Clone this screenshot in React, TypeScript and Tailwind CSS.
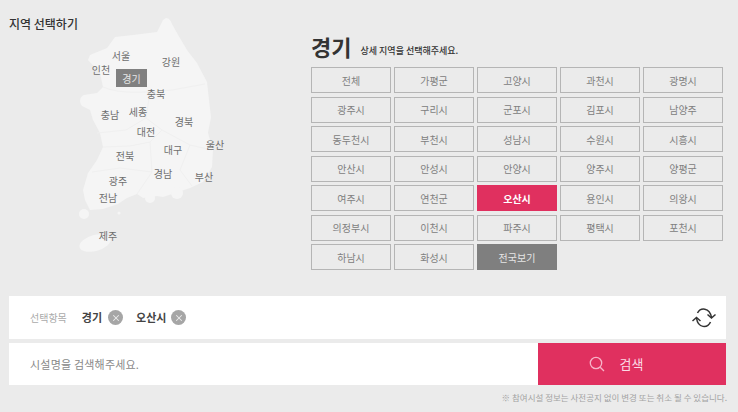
import { X } from 'lucide-react';

const FONT = "font-['Noto_Sans_CJK_KR','Noto_Sans',sans-serif]";

const CITIES = [
  '전체', '가평군', '고양시', '과천시', '광명시',
  '광주시', '구리시', '군포시', '김포시', '남양주',
  '동두천시', '부천시', '성남시', '수원시', '시흥시',
  '안산시', '안성시', '안양시', '양주시', '양평군',
  '여주시', '연천군', '오산시', '용인시', '의왕시',
  '의정부시', '이천시', '파주시', '평택시', '포천시',
  '하남시', '화성시', '전국보기',
];

// places on the map, centred on the label
const REGIONS = [
  { name: '서울', pos: 'left-[121px] top-[56px]' },
  { name: '강원', pos: 'left-[171px] top-[62px]' },
  { name: '인천', pos: 'left-[101px] top-[70px]' },
  { name: '충북', pos: 'left-[156px] top-[94px]' },
  { name: '세종', pos: 'left-[138px] top-[112px]' },
  { name: '충남', pos: 'left-[110px] top-[115px]' },
  { name: '경북', pos: 'left-[184px] top-[122px]' },
  { name: '대전', pos: 'left-[146px] top-[132px]' },
  { name: '울산', pos: 'left-[215px] top-[145px]' },
  { name: '대구', pos: 'left-[173px] top-[150px]' },
  { name: '전북', pos: 'left-[125px] top-[156px]' },
  { name: '경남', pos: 'left-[163px] top-[174px]' },
  { name: '부산', pos: 'left-[204px] top-[177px]' },
  { name: '광주', pos: 'left-[118px] top-[181px]' },
  { name: '전남', pos: 'left-[108px] top-[198px]' },
  { name: '제주', pos: 'left-[108px] top-[236px]' },
];

function KoreaMap() {
  return (
    <svg className="absolute left-0 top-0" width="300" height="270" viewBox="0 0 300 270">
      <path
        fill="#f5f5f5"
        d="M166 18 C169 18 171 21 172 24 L177 33 L187 50 L197 63 L207 82 L209 100 L211 117 L208 133 L213 150 L212 167 L203 182 L190 188 L172 194 L163 197 L157 196 L143 198 L137 194 L127 198 L118 204 L103 209 L90 210 L85 200 L83 190 L88 173 L97 160 L103 147 L100 133 L93 120 L90 110 L82 106 C78 101 81 96 84 95 L97 93 L103 87 L100 73 L88 60 L90 55 L107 48 L115 37 L133 35 L157 32 L163 20 Z"
      />
      <circle cx="177" cy="193" r="6" fill="#f5f5f5" />
      <circle cx="150" cy="198" r="5" fill="#f5f5f5" />
      <circle cx="84" cy="214" r="5" fill="#f5f5f5" />
      <circle cx="119" cy="213" r="1.5" fill="#f5f5f5" />
      <ellipse cx="95" cy="243" rx="16" ry="8" fill="#f5f5f5" transform="rotate(-15 95 243)" />
      <path
        fill="none"
        stroke="#f0f0f0"
        strokeWidth="1"
        d="M103 87 C120 95 150 92 172 90 L205 84 M150 92 L146 118 L162 130 L190 145 L212 150 M97 133 L126 130 L146 118 M103 147 L130 146 L150 142 L162 130 M150 142 L152 172 L137 194 M92 172 L120 168 L152 172 M190 145 L180 170 L192 186"
      />
    </svg>
  );
}

function RemoveBadge() {
  return (
    <span className="flex h-[15px] w-[15px] items-center justify-center rounded-full bg-[#a6a6a6]">
      <X size={10} strokeWidth={2.5} color="#ebebeb" />
    </span>
  );
}

function RefreshIcon() {
  return (
    <svg width="24" height="22" viewBox="0 0 24 22" fill="none" stroke="#333" strokeWidth="1.5">
      <path d="M5.5 6 C8.5 0.5 17.5 0 19.5 10.5" />
      <path d="M15.5 7.5 L19.5 11 L23.5 7.5" />
      <path d="M18.5 15 C15.5 21.5 6 21.5 4.5 11" />
      <path d="M0.5 14 L4.5 10.5 L8.5 14" />
    </svg>
  );
}

function SearchIcon() {
  return (
    <svg width="16" height="16" viewBox="0 0 16 16" fill="none" stroke="#f7b3c8" strokeWidth="1.3">
      <circle cx="7" cy="7" r="5.7" />
      <path d="M11.2 11.2 L15 15" />
    </svg>
  );
}

function cityClass(city: string) {
  if (city === '오산시') return 'bg-[#e0305f] border-[#e0305f] text-white font-bold';
  if (city === '전국보기') return 'bg-[#7f7f7f] border-[#7f7f7f] text-[#e6e6e6]';
  return 'border-[#b5b5b5] text-[#808080]';
}

export default function App() {
  return (
    <div className={`${FONT} flex h-[412px] w-[738px] flex-col overflow-hidden bg-[#ebebeb]`}>
      <div className="flex h-[296px]">
        {/* Map */}
        <div className="relative w-[311px] shrink-0">
          <KoreaMap />
          <h2 className="absolute left-[9px] top-[15px] text-[12px] leading-[17px] font-medium text-[#333333]">
            지역 선택하기
          </h2>
          {REGIONS.map((r) => (
            <span
              key={r.name}
              className={`absolute ${r.pos} -translate-x-1/2 -translate-y-1/2 text-[10px] leading-none text-[#6e6e6e]`}
            >
              {r.name}
            </span>
          ))}
          <span className="absolute left-[116px] top-[69px] flex h-[18px] w-[31px] items-center justify-center bg-[#808080] text-[10px] text-[#e6e6e6]">
            경기
          </span>
        </div>

        {/* City picker */}
        <div className="flex w-[412px] flex-col">
          <div className="flex h-[67px] items-end pb-[5px]">
            <span className="text-[22px] leading-[32px] font-bold text-[#333333]">경기</span>
            <span className="mb-[4px] ml-[9px] text-[9px] leading-[14px] font-medium text-[#333333]">
              상세 지역을 선택해주세요.
            </span>
          </div>
          <div className="grid grid-cols-[repeat(5,80px)] auto-rows-[26px] gap-x-[3px] gap-y-[3.5px]">
            {CITIES.map((city) => (
              <button
                key={city}
                className={`flex items-center justify-center border text-[10px] ${cityClass(city)}`}
              >
                {city}
              </button>
            ))}
          </div>
        </div>
      </div>

      {/* Selected items */}
      <div className="mx-[9px] flex h-[43px] w-[717px] items-center bg-white pl-[21px] pr-[10px]">
        <span className="text-[10px] text-[#aaaaaa]">선택항목</span>
        <span className="ml-[15px] text-[11px] font-bold text-[#444444]">경기</span>
        <span className="ml-[6px]">
          <RemoveBadge />
        </span>
        <span className="ml-[13px] text-[11px] font-bold text-[#444444]">오산시</span>
        <span className="ml-[5px]">
          <RemoveBadge />
        </span>
        <span className="ml-auto">
          <RefreshIcon />
        </span>
      </div>

      {/* Search */}
      <div className="mx-[9px] mt-[3.5px] flex h-[42.5px] w-[717px] bg-white">
        <div className="flex flex-1 items-center pl-[21px] text-[11px] tracking-[0.2px] text-[#888888]">
          시설명을 검색해주세요.
        </div>
        <button className="flex w-[188.5px] items-center gap-[15px] bg-[#e0305f] pl-[51px] text-[13px] text-[#fbdbe5]">
          <SearchIcon />
          검색
        </button>
      </div>

      <p className="mr-[11px] mt-[6px] text-right text-[8.5px] leading-[13px] text-[#a3a3a3]">
        ※ 참여시설 정보는 사전공지 없이 변경 또는 취소 될 수 있습니다.
      </p>
    </div>
  );
}
